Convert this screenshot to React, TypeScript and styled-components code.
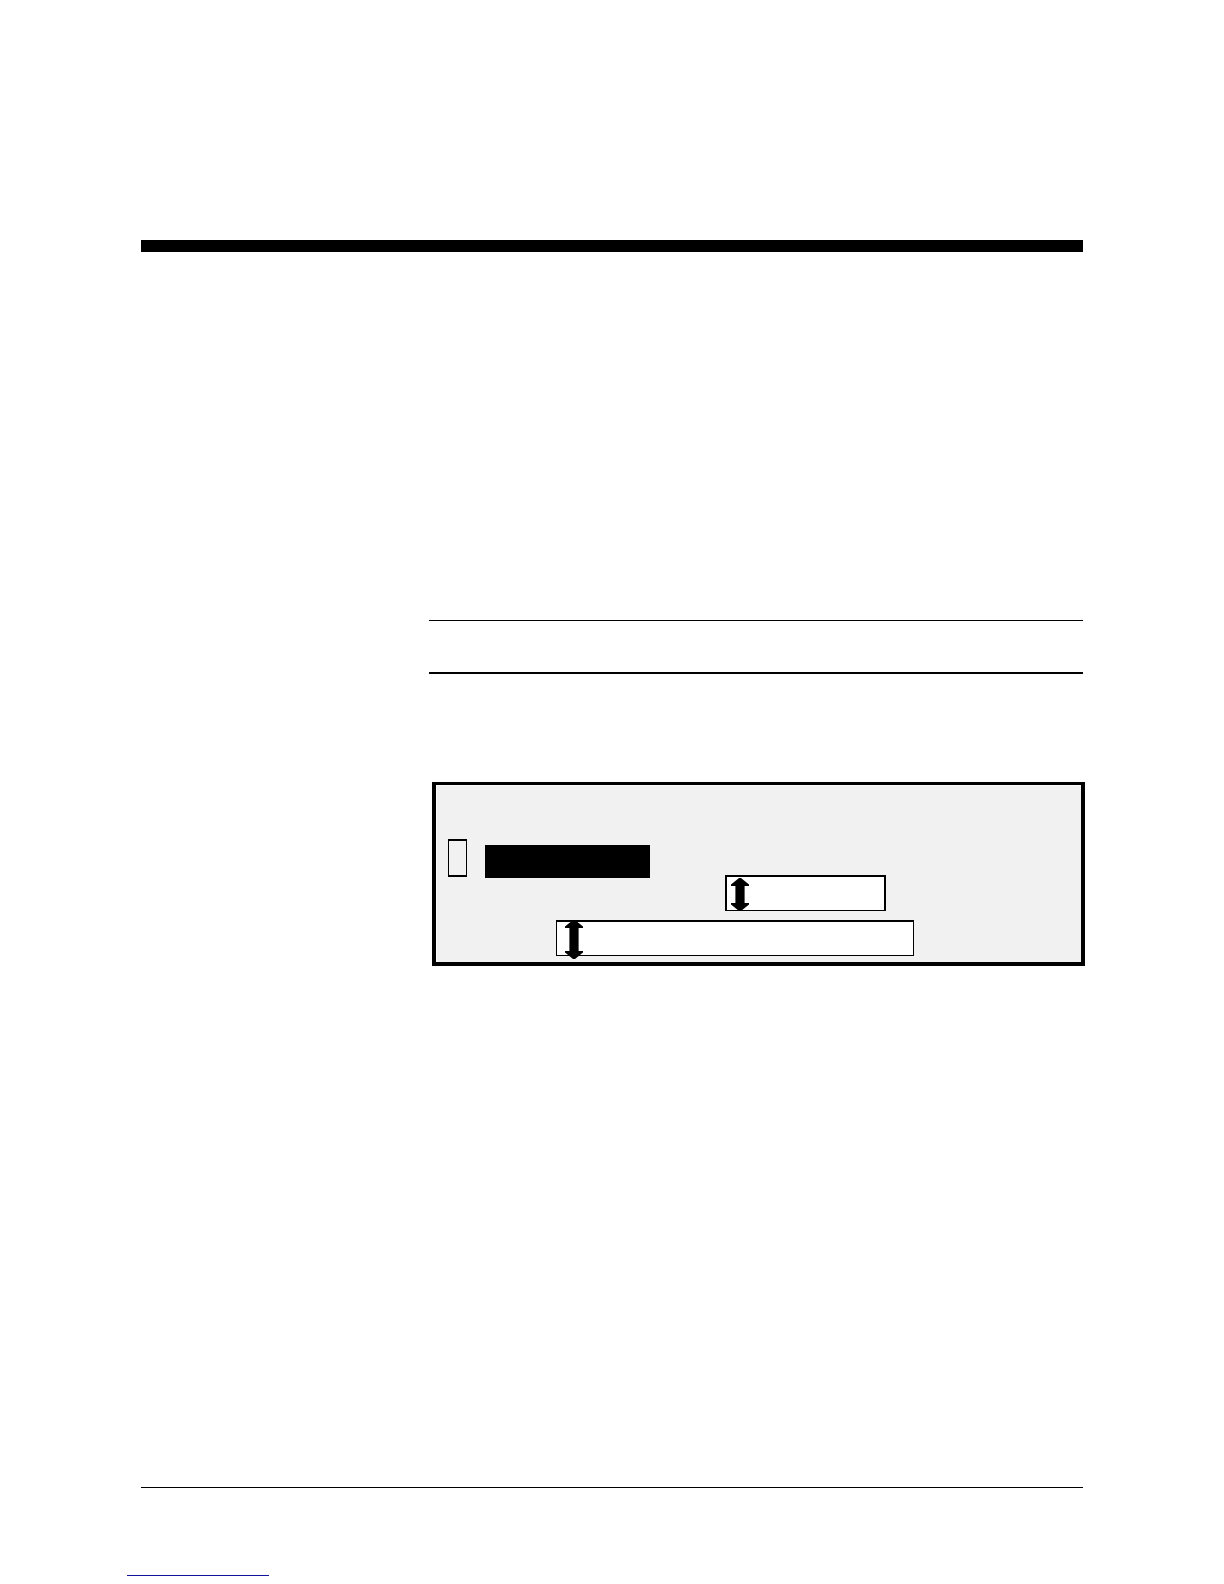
import React from 'react';
import styled, { createGlobalStyle } from 'styled-components';

const GlobalStyle = createGlobalStyle`
  * { box-sizing: border-box; }
  body {
    margin: 0;
    background: #fff;
    color: #000;
    font-family: "Liberation Sans", Arial, sans-serif;
  }
`;

const Page = styled.div`
  display: flex;
  flex-direction: column;
  min-height: 100vh;
  padding: 240px 141px 8px;
`;

const Rule = styled.hr<{ $weight: number }>`
  width: 100%;
  height: ${({ $weight }) => $weight}px;
  margin: 0;
  border: 0;
  background: #000;
`;

const Main = styled.main`
  display: flex;
  flex-direction: column;
  margin: 368px 0 80px 288px;
`;

const Heading = styled.header`
  display: flex;
  flex-direction: column;
  gap: 51px;
`;

const Panel = styled.form`
  display: flex;
  flex-direction: column;
  margin: 108px -2px 0 3px;
  padding: 54px 0 6px;
  border: 4px solid #000;
  border-top-width: 3px;
  background: #f1f1f1;
  box-shadow: inset 1px 1px #fbfbfb;
`;

const Row = styled.div<{ $indent: number; $top?: number }>`
  display: flex;
  align-items: flex-start;
  gap: 18px;
  height: 36px;
  margin-top: ${({ $top = 0 }) => $top}px;
  padding-left: ${({ $indent }) => $indent}px;
`;

const Toggle = styled.input`
  appearance: none;
  flex: none;
  width: 19px;
  height: 38px;
  margin: 0;
  border: 1px solid #000;
  border-width: 2px 1px;
  background: transparent;
`;

const Action = styled.button`
  width: 165px;
  height: 33px;
  margin: 6px 0 0;
  padding: 0;
  border: 0;
  background: #000;
`;

const SpinField = styled.div<{ $width: number }>`
  position: relative;
  width: ${({ $width }) => $width}px;
`;

const SpinInput = styled.input<{ $side: number }>`
  display: block;
  width: 100%;
  height: 36px;
  margin: 0;
  padding: 0 8px 0 32px;
  border: solid #000;
  border-width: 2px ${({ $side }) => $side}px 1px;
  border-radius: 0;
  background: #fff;
  font: 16px "Liberation Sans", Arial, sans-serif;
`;

const Arrow = styled.svg<{ $left: number; $top: number }>`
  position: absolute;
  top: ${({ $top }) => $top}px;
  left: ${({ $left }) => $left}px;
  pointer-events: none;
`;

const Footer = styled.footer`
  display: flex;
  flex-direction: column;
  gap: 87px;
  margin-top: auto;
`;

const FooterLink = styled.a`
  width: 142px;
  height: 1px;
  margin-left: -14px;
  background: #14149c;
`;

function UpDown({ height, left, top }: { height: number; left: number; top: number }) {
  const h = height;
  return (
    <Arrow $left={left} $top={top} width="18" height={h} viewBox={`0 0 18 ${h}`} aria-hidden="true">
      <path
        d={`M8 0H10L18 6.5V8H13.6V${h - 8}H18V${h - 6.5}L10 ${h}H8L0 ${h - 6.5}V${h - 8}H4.4V8H0V6.5Z`}
        fill="#000"
      />
    </Arrow>
  );
}

export default function App() {
  return (
    <>
      <GlobalStyle />
      <Page>
        <Rule $weight={12} />
        <Main>
          <Heading>
            <Rule $weight={1} />
            <Rule $weight={2} />
          </Heading>
          <Panel onSubmit={(e) => e.preventDefault()}>
            <Row $indent={12}>
              <Toggle type="checkbox" aria-label="Toggle" />
              <Action type="button" aria-label="Apply" />
            </Row>
            <Row $indent={289}>
              <SpinField $width={161}>
                <SpinInput $side={2} type="text" aria-label="Value" />
                <UpDown height={33} left={6} top={3} />
              </SpinField>
            </Row>
            <Row $indent={120} $top={9}>
              <SpinField $width={358}>
                <SpinInput $side={1} type="text" aria-label="Option" />
                <UpDown height={39} left={9} top={0} />
              </SpinField>
            </Row>
          </Panel>
        </Main>
        <Footer>
          <Rule $weight={1} />
          <FooterLink href="#" aria-label="Home" />
        </Footer>
      </Page>
    </>
  );
}
